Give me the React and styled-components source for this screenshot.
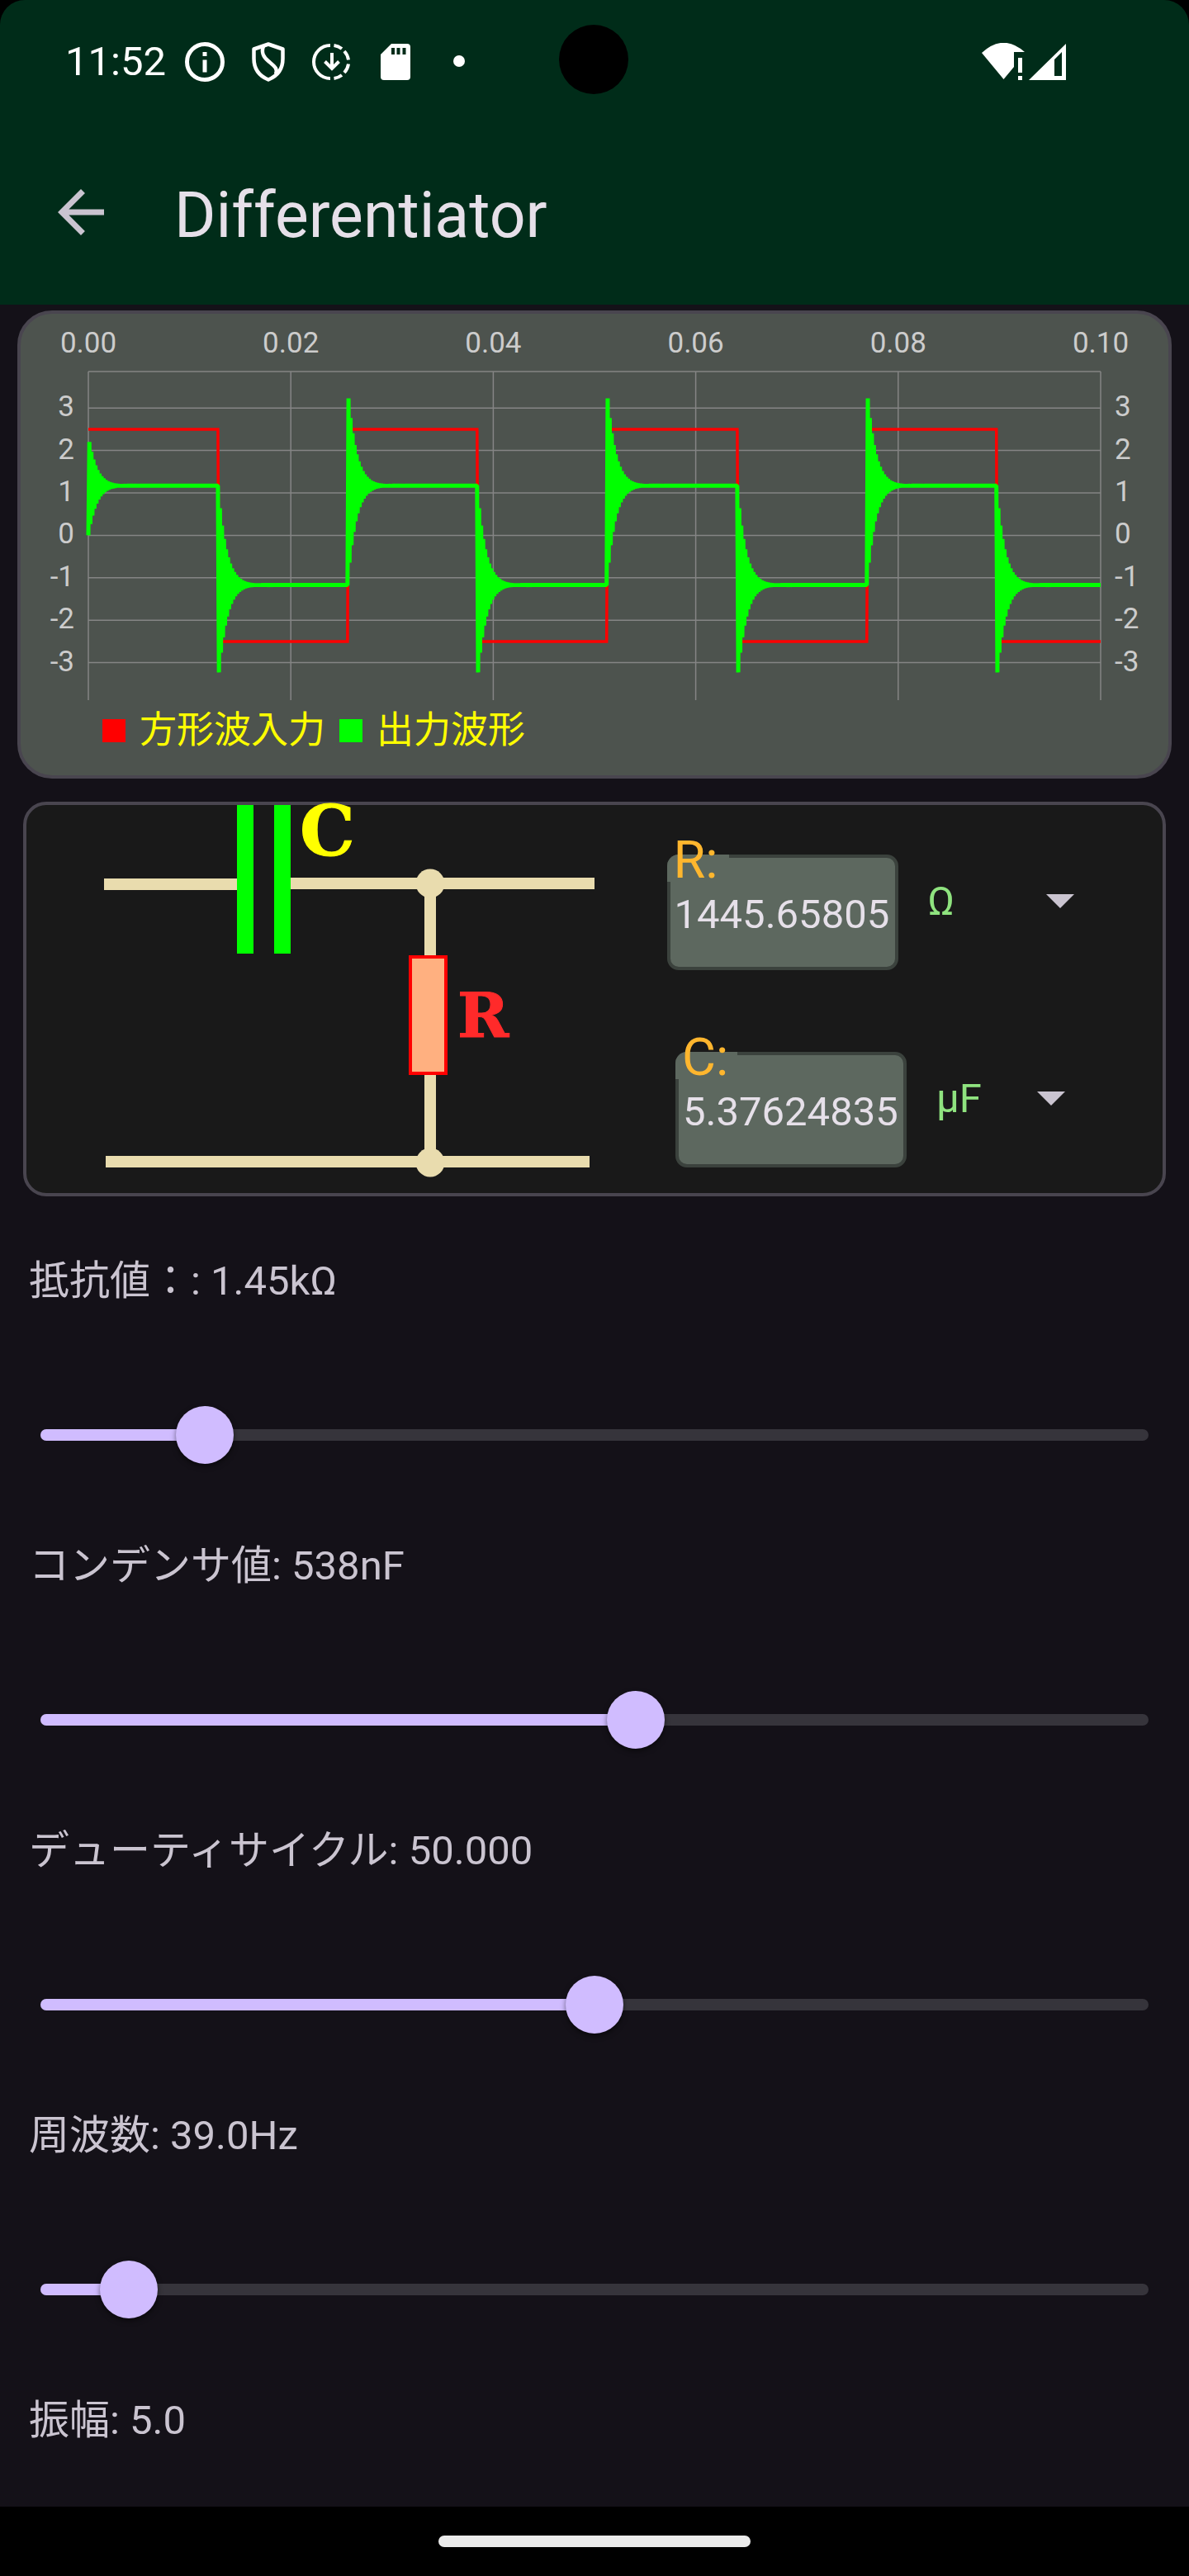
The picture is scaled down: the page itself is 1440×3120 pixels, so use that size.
import React, { useState } from 'react';
import styled, { createGlobalStyle } from 'styled-components';

const colors = {
    header: '#002c19',
    page: '#141118',
    outline: '#49454f',
    chartBg: '#4d534e',
    grid: '#858585',
    axisText: '#cccccc',
    cardBg: '#191919',
    wire: '#e9dcae',
    text: '#e6e0e9',
    textMuted: '#cac4d0',
    primary: '#d0bcff',
    rail: '#36343b',
    fieldBg: '#5d685f',
    fieldBorder: '#3b423d',
    label: '#ffb62e',
    unit: '#8fe37f'
};

const FREQUENCY = 39;
const SAMPLE_TIME = 0.0001;
const SAMPLES = 1000;

// plot area inside the chart's view box
const plot = { left: 82, right: 1308, top: 70, bottom: 468, zero: 268.4, unit: 51.4 };

const toX = n => plot.left + (n / SAMPLES) * (plot.right - plot.left);
const toY = v => plot.zero - v * plot.unit;
const toPoints = values => values.map((v, n) => `${toX(n).toFixed(2)},${toY(v).toFixed(2)}`).join(' ');

const squareWave = Array.from({ length: SAMPLES + 1 }, (_, n) =>
    (n * SAMPLE_TIME * FREQUENCY) % 1 < 0.5 ? 2.5 : -2.5
);

// the output overshoots on every edge and rings down to its final level
const outputWave = squareWave.reduce((out, input, n) => {
    const target = input > 0 ? 1.17 : -1.17;
    out.push(n === 0 ? 0 : target - 0.88 * (out[n - 1] - target));
    return out;
}, []);

const StatusIcons = () => (
    <React.Fragment>
        <StatusIcon viewBox="0 0 52 52">
            <circle cx="26" cy="26" r="21.500" fill="none" stroke="#fff" strokeWidth="5" />
            <path d="M23.500 14h5v5h-5zM23.500 23.500h5v15h-5z" fill="#fff" />
        </StatusIcon>
        <StatusIcon viewBox="0 0 52 52" fill="none" stroke="#fff" strokeWidth="4.500" strokeLinejoin="round">
            <path d="M26 4.500L8.500 10.500V22C8.500 34 15 43 26 47.500C37 43 43.500 34 43.500 22V10.500Z" />
            <path d="M20 7C17 15 20 20 26 25C33 31 38 34 35 41" />
        </StatusIcon>
        <StatusIcon viewBox="0 0 52 52" fill="none" stroke="#fff" strokeWidth="4">
            <path d="M24 6A20 20 0 0 0 24 46" />
            <path d="M28.500 6A20 20 0 0 1 38 10M41 13A20 20 0 0 1 46 23.500M46 28.500A20 20 0 0 1 41 39M38 42A20 20 0 0 1 28.500 46" />
            <path d="M26 15V33M17.500 25.500L26 34L34.500 25.500" />
        </StatusIcon>
        <StatusIcon viewBox="0 0 52 52">
            <path d="M21 4H40a4 4 0 0 1 4 4V44a4 4 0 0 1-4 4H12a4 4 0 0 1-4-4V17Z" fill="#fff" />
            <path d="M21 9h4v8h-4zM27.500 9h4v8h-4zM34.500 9h4v8h-4z" fill={colors.header} />
        </StatusIcon>
        <StatusIcon viewBox="0 0 52 52">
            <circle cx="26" cy="25" r="7" fill="#fff" />
        </StatusIcon>
    </React.Fragment>
);

const Signals = () => (
    <SignalIcons viewBox="0 0 102 45">
        <path d="M0 12Q26 -12 52 11H39V29L26.500 44Z" fill="#fff" />
        <path d="M44 18h5v18h-5zM44 40h5v5h-5z" fill="#fff" />
        <path fillRule="evenodd" d="M102 1V45H57ZM97 11L88 20V40H97Z" fill="#fff" />
    </SignalIcons>
);

const WaveChart = () => (
    <ChartSvg viewBox="0 0 1390 479" role="img" aria-label="方形波入力 出力波形">
        <g stroke={colors.grid} strokeWidth="1.500">
            {[3, 2, 1, 0, -1, -2, -3].map(v => (
                <line key={v} x1={plot.left} x2={plot.right} y1={toY(v)} y2={toY(v)} />
            ))}
            {[0, 200, 400, 600, 800, 1000].map(n => (
                <line key={n} x1={toX(n)} x2={toX(n)} y1={plot.top} y2={plot.bottom} />
            ))}
            <line x1={plot.left} x2={plot.right} y1={plot.top} y2={plot.top} />
        </g>
        <g fill={colors.axisText} fontSize="35">
            {[0, 200, 400, 600, 800, 1000].map(n => (
                <text key={n} x={toX(n)} y="47" textAnchor="middle">{(n * SAMPLE_TIME).toFixed(2)}</text>
            ))}
            {[3, 2, 1, 0, -1, -2, -3].map(v => (
                <React.Fragment key={v}>
                    <text x="65" y={toY(v) + 10} textAnchor="end">{v}</text>
                    <text x="1325" y={toY(v) + 10}>{v}</text>
                </React.Fragment>
            ))}
        </g>
        <polyline points={toPoints(squareWave)} fill="none" stroke="#ff0000" strokeWidth="3.500" />
        <polyline points={toPoints(outputWave)} fill="none" stroke="#00ff00" strokeWidth="5" strokeLinejoin="bevel" />
    </ChartSvg>
);

const Circuit = () => (
    <CircuitSvg viewBox="0 0 688 470">
        <g fill={colors.wire}>
            <rect x="94" y="89" width="162" height="14" />
            <rect x="319" y="88" width="369" height="14" />
            <rect x="96" y="425" width="586" height="14" />
            <rect x="482" y="95" width="14" height="337" />
            <circle cx="489" cy="95" r="17.500" />
            <circle cx="489" cy="433" r="17.500" />
        </g>
        <g fill="#00ff00">
            <rect x="255" y="0" width="20" height="180" />
            <rect x="300" y="0" width="20" height="180" />
        </g>
        <rect x="465" y="184" width="43" height="141" fill="#ffb080" stroke="#ff0000" strokeWidth="4" />
        <CircuitText x="331" y="61" fontSize="84" $color="#ffff00">C</CircuitText>
        <CircuitText x="522" y="281" fontSize="75" $color="#ff2a2a">R</CircuitText>
    </CircuitSvg>
);

const ValueField = ({ id, name, initial, units, spinnerWidth }) => {
    const [value, setValue] = useState(initial);
    return (
        <FieldRow>
            <Field>
                <FieldLabel htmlFor={id}>{name}</FieldLabel>
                <FieldInput id={id} value={value} onChange={e => setValue(e.target.value)} />
            </Field>
            <Spinner $width={spinnerWidth}>
                <SpinnerSelect aria-label={`${name} unit`} defaultValue={units[0]}>
                    {units.map(unit => <option key={unit}>{unit}</option>)}
                </SpinnerSelect>
                <SpinnerArrow viewBox="0 0 34 17">
                    <path d="M0 0H34L17 17Z" fill={colors.textMuted} />
                </SpinnerArrow>
            </Spinner>
        </FieldRow>
    );
};

const ParamSlider = ({ id, text, initial }) => {
    const [value, setValue] = useState(initial);
    return (
        <Param>
            <ParamLabel htmlFor={id}>{text}</ParamLabel>
            <SliderBox>
                <Rail>
                    <RailFill style={{ width: `${value / 10}%` }} />
                </Rail>
                <Range
                    id={id}
                    type="range"
                    min="0"
                    max="1000"
                    value={value}
                    onChange={e => setValue(Number(e.target.value))}
                />
            </SliderBox>
        </Param>
    );
};

const params = [
    { id: 'resistance', text: '抵抗値：: 1.45kΩ', initial: 148 },
    { id: 'capacitance', text: 'コンデンサ値: 538nF', initial: 537 },
    { id: 'duty', text: 'デューティサイクル: 50.000', initial: 500 },
    { id: 'frequency', text: '周波数: 39.0Hz', initial: 80 }
];

const App = () => (
    <Page>
        <GlobalStyle />
        <Header>
            <StatusBar>
                <Time>11:52</Time>
                <StatusIcons />
                <Signals />
                <Camera />
            </StatusBar>
            <AppBar>
                <BackButton aria-label="Back">
                    <svg viewBox="0 0 24 24" width="84" height="84">
                        <path d="M20 11H7.830l5.590-5.590L12 4l-8 8 8 8 1.410-1.410L7.830 13H20z" fill={colors.textMuted} />
                    </svg>
                </BackButton>
                <Title>Differentiator</Title>
            </AppBar>
        </Header>
        <Content>
            <ChartCard>
                <WaveChart />
                <Legend>
                    <LegendMark $color="#ff0000" />
                    <span>方形波入力</span>
                    <LegendMark $color="#00ff00" />
                    <span>出力波形</span>
                </Legend>
            </ChartCard>
            <CircuitCard>
                <Circuit />
                <Fields>
                    <ValueField id="r" name="R:" initial="1445.65805" units={['Ω', 'kΩ', 'MΩ']} spinnerWidth={233} />
                    <ValueField id="c" name="C:" initial="5.37624835" units={['µF', 'nF', 'pF']} spinnerWidth={212} />
                </Fields>
            </CircuitCard>
            <Params>
                {params.map(param => <ParamSlider key={param.id} {...param} />)}
                <ParamLabel as="p">振幅: 5.0</ParamLabel>
            </Params>
        </Content>
        <NavBar>
            <NavHandle />
        </NavBar>
    </Page>
);

export default App;

const GlobalStyle = createGlobalStyle`
    * {
        box-sizing: border-box;
    }
    body {
        margin: 0;
        background-color: #000;
        font-family: Roboto, "Noto Sans CJK JP", sans-serif;
    }
    button, input, select {
        font-family: inherit;
    }
`

const Page = styled.div`
    display: flex;
    flex-direction: column;
    min-height: 100vh;
`

const Header = styled.header`
    background-color: ${colors.header};
    border-radius: 30px 30px 0 0;
`

const StatusBar = styled.div`
    position: relative;
    display: flex;
    align-items: center;
    height: 145px;
    padding: 4px 149px 0 79px;
`

const Time = styled.span`
    width: 130px;
    color: #fff;
    font-size: 49px;
    line-height: 58px;
`

const StatusIcon = styled.svg`
    width: 52px;
    height: 52px;
    margin-right: 25px;
    &:nth-of-type(1) {
        margin-left: 13px;
    }
`

const SignalIcons = styled.svg`
    width: 102px;
    height: 45px;
    margin-left: auto;
`

const Camera = styled.div`
    position: absolute;
    top: 30px;
    left: 50%;
    width: 84px;
    height: 84px;
    margin-left: -43px;
    border-radius: 50%;
    background-color: #000;
`

const AppBar = styled.div`
    display: flex;
    align-items: center;
    height: 224px;
    padding: 0 56px;
`

const BackButton = styled.button`
    display: flex;
    padding: 0;
    border: none;
    background: none;
`

const Title = styled.h1`
    margin: 8px 0 0 71px;
    color: ${colors.text};
    font-size: 77px;
    font-weight: 400;
    line-height: 90px;
`

const Content = styled.main`
    flex-grow: 1;
    background-color: ${colors.page};
`

const ChartCard = styled.section`
    margin: 7px 21px 0;
    padding-bottom: 28px;
    border: 4px solid ${colors.outline};
    border-radius: 42px;
    background-color: ${colors.chartBg};
`

const ChartSvg = styled.svg`
    display: block;
    width: 100%;
`

const Legend = styled.div`
    display: flex;
    align-items: center;
    gap: 17px;
    padding-left: 99px;
    color: #ffff00;
    font-size: 45px;
    line-height: 52px;
`

const LegendMark = styled.span`
    width: 28px;
    height: 28px;
    background-color: ${props => props.$color};
`

const CircuitCard = styled.section`
    display: grid;
    grid-template-columns: 1fr 1fr;
    margin: 28px 28px 0;
    border: 4px solid ${colors.outline};
    border-radius: 28px;
    background-color: ${colors.cardBg};
`

const CircuitSvg = styled.svg`
    display: block;
    width: 100%;
    overflow: visible;
`

const CircuitText = styled.text`
    fill: ${props => props.$color};
    stroke: ${props => props.$color};
    stroke-width: 1px;
    font-family: "DejaVu Serif", serif;
    font-weight: 700;
`

const Fields = styled.div`
    display: flex;
    flex-direction: column;
    align-items: center;
    gap: 99px;
    padding-top: 60px;
`

const FieldRow = styled.div`
    display: flex;
    align-items: flex-start;
`

const Field = styled.div`
    position: relative;
    width: 280px;
    /* hides the outline behind the floating label */
    &::before {
        content: "";
        position: absolute;
        top: 0;
        left: 0;
        width: 75px;
        height: 33px;
        border-top-left-radius: 14px;
        background-color: ${colors.fieldBg};
    }
`

const FieldLabel = styled.label`
    position: absolute;
    top: -30px;
    left: 8px;
    color: ${colors.label};
    font-size: 63px;
    line-height: 74px;
`

const FieldInput = styled.input`
    display: block;
    width: 100%;
    height: 140px;
    padding: 4px 0 0 5px;
    border: 4px solid ${colors.fieldBorder};
    border-radius: 14px;
    background-color: ${colors.fieldBg};
    color: ${colors.text};
    font-size: 49px;
    outline: none;
`

const Spinner = styled.div`
    position: relative;
    width: ${props => props.$width}px;
`

const SpinnerSelect = styled.select`
    width: 100%;
    height: 112px;
    padding: 0 0 0 36px;
    border: none;
    background: none;
    color: ${colors.unit};
    font-size: 49px;
    appearance: none;
`

const SpinnerArrow = styled.svg`
    position: absolute;
    top: 48px;
    right: 20px;
    width: 34px;
    height: 17px;
    pointer-events: none;
`

const Params = styled.section`
    padding: 74px 14px;
`

const Param = styled.div`
    display: flex;
    flex-direction: column;
    gap: 122px;
    margin-bottom: 95px;
`

const ParamLabel = styled.label`
    margin: 0;
    padding-left: 21px;
    color: ${colors.textMuted};
    font-size: 49px;
    line-height: 58px;
`

const SliderBox = styled.div`
    display: grid;
    align-items: center;
`

const Rail = styled.div`
    grid-area: 1 / 1;
    height: 14px;
    margin: 0 35px;
    border-radius: 7px;
    background-color: ${colors.rail};
`

const RailFill = styled.div`
    height: 100%;
    border-radius: 7px;
    background-color: ${colors.primary};
`

const Range = styled.input`
    grid-area: 1 / 1;
    width: 100%;
    height: 70px;
    margin: 0;
    background: none;
    appearance: none;
    &::-webkit-slider-thumb {
        width: 70px;
        height: 70px;
        border-radius: 50%;
        background-color: ${colors.primary};
        box-shadow: 0 3px 6px rgba(0, 0, 0, 0.5);
        appearance: none;
    }
`

const NavBar = styled.footer`
    display: flex;
    align-items: center;
    justify-content: center;
    height: 84px;
    background-color: #000;
`

const NavHandle = styled.div`
    width: 378px;
    height: 14px;
    border-radius: 7px;
    background-color: #ebebeb;
`
